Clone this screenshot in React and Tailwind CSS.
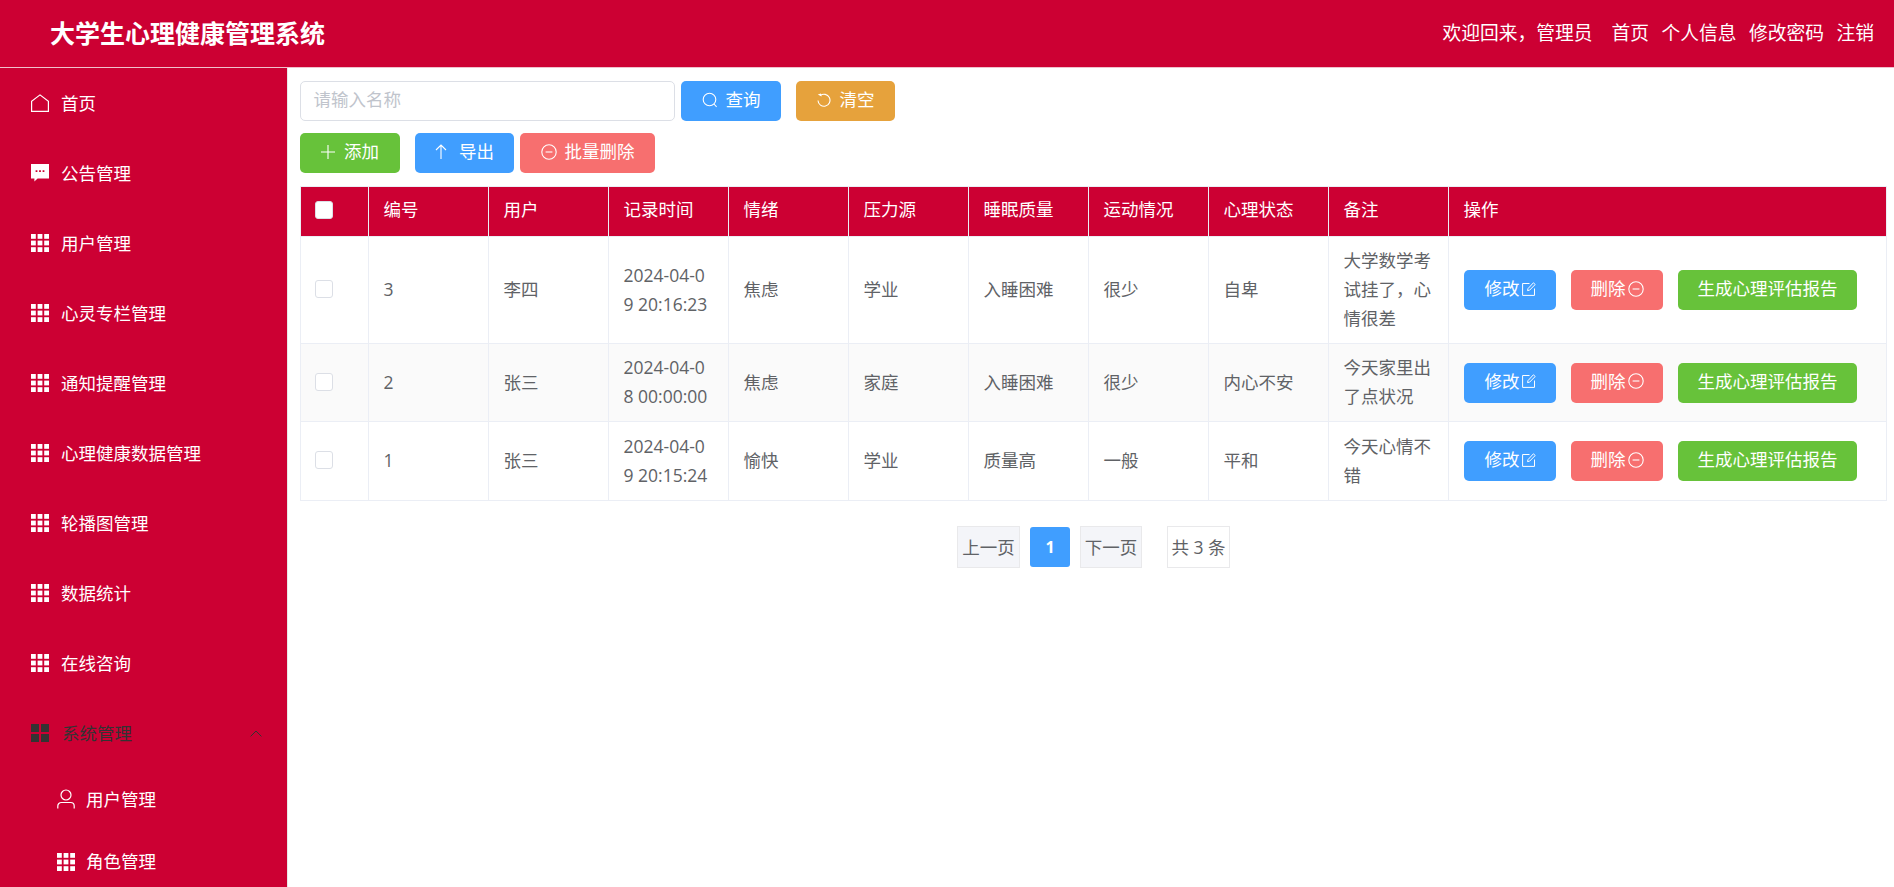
import React from "react";

const HouseIcon = () => (
  <svg width="18" height="18" viewBox="0 0 18 18" fill="none" stroke="currentColor" strokeWidth="1.2">
    <path d="M9 .9 17.4 7.4V17.4H.6V7.4Z" />
  </svg>
);

const CommentIcon = () => (
  <svg width="18" height="18" viewBox="0 0 18 18" fill="currentColor">
    <path fillRule="evenodd" d="M0 0H18V14.4H6.6L3.4 17.6V14.4H0ZM4.6 6.2V8H6.4V6.2ZM8.1 6.2V8H9.9V6.2ZM11.6 6.2V8H13.4V6.2Z" />
  </svg>
);

const GridIcon = () => (
  <svg width="18" height="18" viewBox="0 0 18 18" fill="currentColor">
    <rect x="0" y="0" width="4.8" height="4.8" />
    <rect x="6.6" y="0" width="4.8" height="4.8" />
    <rect x="13.2" y="0" width="4.8" height="4.8" />
    <rect x="0" y="6.6" width="4.8" height="4.8" />
    <rect x="6.6" y="6.6" width="4.8" height="4.8" />
    <rect x="13.2" y="6.6" width="4.8" height="4.8" />
    <rect x="0" y="13.2" width="4.8" height="4.8" />
    <rect x="6.6" y="13.2" width="4.8" height="4.8" />
    <rect x="13.2" y="13.2" width="4.8" height="4.8" />
  </svg>
);

const MenuIcon = () => (
  <svg width="18" height="18" viewBox="0 0 18 18" fill="currentColor">
    <rect x="0" y="0" width="8" height="8" />
    <rect x="10" y="0" width="8" height="8" />
    <rect x="0" y="10" width="8" height="8" />
    <rect x="10" y="10" width="8" height="8" />
  </svg>
);

const UserIcon = () => (
  <svg width="18" height="20" viewBox="0 0 18 20" fill="none" stroke="currentColor" strokeWidth="1.2">
    <circle cx="9" cy="6" r="5" />
    <path d="M.8 19.5V17A3.5 3.5 0 0 1 4.3 13.5H13.7A3.5 3.5 0 0 1 17.2 17V19.5" />
  </svg>
);

const SearchIcon = () => (
  <svg width="16" height="16" viewBox="0 0 16 16" fill="none" stroke="currentColor" strokeWidth="1.1">
    <circle cx="7.5" cy="7.5" r="6.3" />
    <path d="M12 12 14.6 14.8" />
  </svg>
);

const RefreshIcon = () => (
  <svg width="14" height="15" viewBox="0 0 14 15" fill="none" stroke="currentColor" strokeWidth="1.1">
    <path d="M3.2 3.6A6 6 0 1 1 1 8.5" />
    <path d="M.8 2.6 3.9 1.4 4.6 4.4" fill="currentColor" stroke="none" />
  </svg>
);

const PlusIcon = () => (
  <svg width="14" height="14" viewBox="0 0 14 14" stroke="currentColor" strokeWidth="1.1">
    <path d="M7 0V14M0 7H14" />
  </svg>
);

const UpIcon = () => (
  <svg width="12" height="15" viewBox="0 0 12 15" fill="none" stroke="currentColor" strokeWidth="1.1">
    <path d="M6 1V15M1 6 6 1 11 6" />
  </svg>
);

const MinusCircleIcon = () => (
  <svg width="16" height="16" viewBox="0 0 16 16" fill="none" stroke="currentColor" strokeWidth="1.1">
    <circle cx="8" cy="8" r="7.2" />
    <path d="M4.6 8H11.4" />
  </svg>
);

const EditIcon = () => (
  <svg width="14" height="14" viewBox="0 0 14 14" fill="none" stroke="currentColor" strokeWidth="1">
    <path d="M7.5 1.5H.6V13.4H12.5V6.5" />
    <path d="M5.5 8.6 6 6.6 11.4.8 13.2 2.5 7.6 8.2Z" />
  </svg>
);

const ChevronUpIcon = () => (
  <svg width="12" height="7" viewBox="0 0 12 7" fill="none" stroke="currentColor" strokeWidth="1">
    <path d="M.6 6.4 6 1 11.4 6.4" />
  </svg>
);

const menus = [
  { name: "首页", icon: <HouseIcon /> },
  { name: "公告管理", icon: <CommentIcon /> },
  { name: "用户管理", icon: <GridIcon /> },
  { name: "心灵专栏管理", icon: <GridIcon /> },
  { name: "通知提醒管理", icon: <GridIcon /> },
  { name: "心理健康数据管理", icon: <GridIcon /> },
  { name: "轮播图管理", icon: <GridIcon /> },
  { name: "数据统计", icon: <GridIcon /> },
  { name: "在线咨询", icon: <GridIcon /> },
];

const columns = ["编号", "用户", "记录时间", "情绪", "压力源", "睡眠质量", "运动情况", "心理状态", "备注"];

const rows = [
  { id: 3, user: "李四", time: "2024-04-09 20:16:23", mood: "焦虑", stress: "学业", sleep: "入睡困难", sport: "很少", state: "自卑", note: "大学数学考试挂了\uFF0C心情很差", height: "h-[107px]" },
  { id: 2, user: "张三", time: "2024-04-08 00:00:00", mood: "焦虑", stress: "家庭", sleep: "入睡困难", sport: "很少", state: "内心不安", note: "今天家里出了点状况", height: "h-[78px]", striped: true },
  { id: 1, user: "张三", time: "2024-04-09 20:15:24", mood: "愉快", stress: "学业", sleep: "质量高", sport: "一般", state: "平和", note: "今天心情不错", height: "h-[79px]" },
];

const Btn = ({ color, width, children }) => (
  <button className={`${color} ${width} h-10 pb-[3px] rounded-[5px] text-white text-[17.5px] flex items-center justify-center shrink-0`}>
    {children}
  </button>
);

const Cell = ({ children }) => (
  <td className="border border-[#ebeef5] px-[14.5px] py-[9px] pb-[10px] text-[#606266] break-all leading-[29px]">{children}</td>
);

export default function App() {
  return (
    <div className="h-[887px] overflow-hidden bg-white text-[17.5px] font-['Open_Sans','Noto_Sans_CJK_SC',sans-serif]">
      <header className="h-[68px] bg-[#cc0033] border-b border-[#f0c0cc] flex items-center text-white">
        <div className="pl-[50px] text-[25px] font-bold">大学生心理健康管理系统</div>
        <div className="ml-auto pr-5 flex items-center text-[18.75px]">
          <span className="mr-[19px]">{"欢迎回来\uFF0C管理员"}</span>
          <span className="mr-[12.5px]">首页</span>
          <span className="mr-[12.5px]">个人信息</span>
          <span className="mr-[12.5px]">修改密码</span>
          <span>注销</span>
        </div>
      </header>

      <div className="flex h-[819px]">
        <aside className="w-[288px] shrink-0 bg-[#cc0033] border-r border-[#e8e8e8] text-white">
          {menus.map((m) => (
            <div key={m.name} className="h-[70px] pl-[31px] flex items-center">
              <span className="w-[18px] flex justify-center mr-[12px]">{m.icon}</span>
              {m.name}
            </div>
          ))}
          <div className="h-[70px] pl-[31px] pr-[25px] flex items-center text-[#333333]">
            <span className="w-[18px] flex justify-center mr-[13px]">
              <MenuIcon />
            </span>
            系统管理
            <span className="ml-auto">
              <ChevronUpIcon />
            </span>
          </div>
          <div className="h-[62px] pl-[57px] flex items-center">
            <span className="w-[18px] flex justify-center mr-[11px]">
              <UserIcon />
            </span>
            用户管理
          </div>
          <div className="h-[63px] pl-[57px] flex items-center">
            <span className="w-[18px] flex justify-center mr-[11px]">
              <GridIcon />
            </span>
            角色管理
          </div>
        </aside>

        <main className="flex-1 min-w-0 pl-3 pr-[7px] pt-[13px]">
          <div className="flex items-center">
            <div className="w-[375px] h-10 pb-[4px] border border-[#dcdfe6] rounded-[5px] px-[12.5px] flex items-center text-[#c0c4cc]">
              请输入名称
            </div>
            <div className="ml-[6px]">
              <Btn color="bg-[#409eff]" width="w-[100px]">
                <SearchIcon />
                <span className="ml-[8px]">查询</span>
              </Btn>
            </div>
            <div className="ml-[15px]">
              <Btn color="bg-[#e6a23c]" width="w-[99px]">
                <RefreshIcon />
                <span className="ml-[9px]">清空</span>
              </Btn>
            </div>
          </div>

          <div className="flex items-center mt-3 mb-[13px]">
            <Btn color="bg-[#67c23a]" width="w-[100px]">
              <PlusIcon />
              <span className="ml-[9px]">添加</span>
            </Btn>
            <div className="ml-[15px]">
              <Btn color="bg-[#409eff]" width="w-[99px]">
                <UpIcon />
                <span className="ml-[12px]">导出</span>
              </Btn>
            </div>
            <div className="ml-[6px]">
              <Btn color="bg-[#f76f6f]" width="w-[135px]">
                <MinusCircleIcon />
                <span className="ml-[8px]">批量删除</span>
              </Btn>
            </div>
          </div>

          <table className="table-fixed border-collapse w-[1587px]">
            <colgroup>
              <col className="w-[68px]" />
              {columns.map((c) => (
                <col key={c} className="w-[120px]" />
              ))}
              <col />
            </colgroup>
            <thead>
              <tr className="bg-[#cc0033] text-white h-[50px] text-left">
                <th className="border border-[#ebeef5] pl-[14px] pb-[4px] font-normal">
                  <span className="block w-[18px] h-[18px] rounded-[3px] bg-white border border-[#dcdfe6]" />
                </th>
                {columns.map((c) => (
                  <th key={c} className="border border-[#ebeef5] px-[14.5px] pb-[4px] font-normal">
                    {c}
                  </th>
                ))}
                <th className="border border-[#ebeef5] px-[14.5px] pb-[4px] font-normal">操作</th>
              </tr>
            </thead>
            <tbody>
              {rows.map((r) => (
                <tr key={r.id} className={`${r.height} ${r.striped ? "bg-[#fafafa]" : "bg-white"}`}>
                  <td className="border border-[#ebeef5] pl-[14px] pb-[2px]">
                    <span className="block w-[18px] h-[18px] rounded-[3px] bg-white border border-[#dcdfe6]" />
                  </td>
                  <Cell>{r.id}</Cell>
                  <Cell>{r.user}</Cell>
                  <Cell>{r.time}</Cell>
                  <Cell>{r.mood}</Cell>
                  <Cell>{r.stress}</Cell>
                  <Cell>{r.sleep}</Cell>
                  <Cell>{r.sport}</Cell>
                  <Cell>{r.state}</Cell>
                  <Cell>{r.note}</Cell>
                  <td className="border border-[#ebeef5] px-[15px]">
                    <div className="flex items-center gap-[15px]">
                      <Btn color="bg-[#409eff]" width="w-[92px]">
                        修改
                        <span className="ml-[2px] flex">
                          <EditIcon />
                        </span>
                      </Btn>
                      <Btn color="bg-[#f76f6f]" width="w-[92px]">
                        删除
                        <span className="ml-[2px] flex">
                          <MinusCircleIcon />
                        </span>
                      </Btn>
                      <Btn color="bg-[#67c23a]" width="w-[179px]">
                        生成心理评估报告
                      </Btn>
                    </div>
                  </td>
                </tr>
              ))}
            </tbody>
          </table>

          <div className="flex items-center justify-center mt-[25px] text-[#606266]">
            <span className="w-[63px] h-[42px] bg-[#f4f5f9] border border-[#e9e9eb] flex items-center justify-center">上一页</span>
            <span className="ml-[10px] w-10 h-10 rounded-[3px] bg-[#409eff] text-white font-bold text-[16px] flex items-center justify-center">1</span>
            <span className="ml-[10px] w-[62px] h-[42px] bg-[#f4f5f9] border border-[#e9e9eb] flex items-center justify-center">下一页</span>
            <span className="ml-[25px] w-[63px] h-[42px] bg-white border border-[#e9e9eb] flex items-center justify-center">共 3 条</span>
          </div>
        </main>
      </div>
    </div>
  );
}
